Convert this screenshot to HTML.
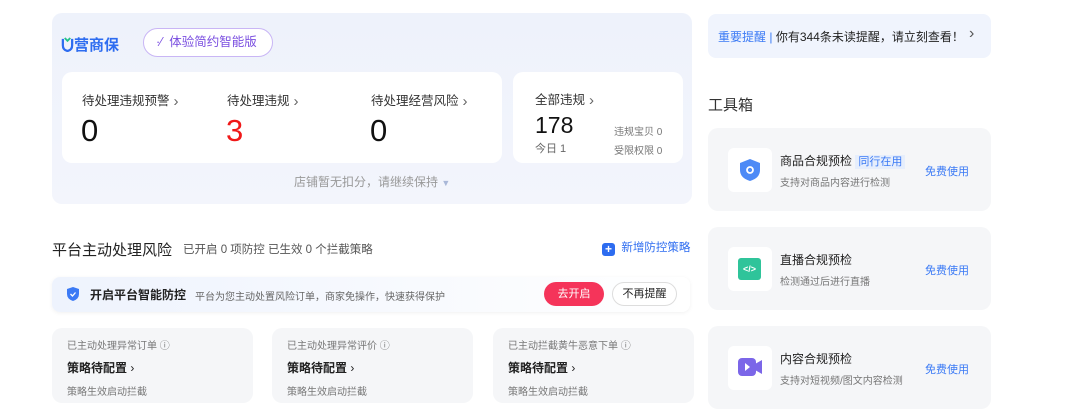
<!DOCTYPE html>
<html><head><meta charset="utf-8"><style>
*{margin:0;padding:0;box-sizing:border-box}
body{width:1086px;height:413px;background:#fff;font-family:"Liberation Sans","Noto Sans CJK SC",sans-serif;position:relative;overflow:hidden;color:#333}
.a{position:absolute;white-space:nowrap}
.top{left:52px;top:13px;width:640px;height:191px;border-radius:10px;background:linear-gradient(180deg,#eef2fb,#f3f5fc)}
.wc{background:#fff;border-radius:10px}
.lbl{font-size:12.5px;color:#333}
.big{font-size:31px;color:#111;font-family:"Liberation Sans",sans-serif}
.gray{background:#f5f6f8;border-radius:10px}
.chev{color:#666;font-size:15px;margin-left:4px;position:relative;top:1px}
</style></head><body>
<div class="a top"></div>
<div class="a" style="left:61px;top:34px;font-size:15px;font-weight:bold;color:#2d6cf0;">
<svg width="13" height="15" viewBox="0 0 14 16" style="vertical-align:-2px"><path d="M2 2 L2 9 Q2 14 7 15 Q12 14 12 9 L12 2" fill="none" stroke="#2d6cf0" stroke-width="2.4"/><path d="M4 1 L7 4 L10 1" fill="none" stroke="#25c28a" stroke-width="2"/></svg>营商保</div>
<div class="a" style="left:143px;top:28px;width:130px;height:29px;border-radius:15px;border:1.5px solid #c9b6f5;background:#fff;font-size:12.5px;color:#7a4ee0;line-height:26px;padding-left:12px">·⁄ &nbsp;体验简约智能版</div>
<div class="a wc" style="left:62px;top:72px;width:440px;height:91px"></div>
<div class="a wc" style="left:513px;top:72px;width:170px;height:91px"></div>
<div class="a lbl" style="left:82px;top:90px">待处理违规预警<span class="chev">›</span></div>
<div class="a lbl" style="left:227px;top:90px">待处理违规<span class="chev">›</span></div>
<div class="a lbl" style="left:371px;top:90px">待处理经营风险<span class="chev">›</span></div>
<div class="a big" style="left:81px;top:113px">0</div>
<div class="a big" style="left:226px;top:113px;color:#f01818">3</div>
<div class="a big" style="left:370px;top:113px">0</div>
<div class="a lbl" style="left:535px;top:89px">全部违规<span class="chev">›</span></div>
<div class="a" style="left:535px;top:112px;font-size:23px;color:#111">178</div>
<div class="a" style="left:535px;top:140px;font-size:11px;color:#666">今日 1</div>
<div class="a" style="left:614px;top:123px;font-size:10px;color:#777">违规宝贝 0</div>
<div class="a" style="left:614px;top:142px;font-size:10px;color:#777">受限权限 0</div>
<div class="a" style="left:294px;top:173px;font-size:12px;color:#999">店铺暂无扣分，请继续保持 <span style="color:#a9b8d8;font-size:9px">▼</span></div>

<div class="a" style="left:52px;top:239px;font-size:15px;color:#222">平台主动处理风险</div>
<div class="a" style="left:183px;top:241px;font-size:11.5px;color:#555">已开启 0 项防控 已生效 0 个拦截策略</div>
<div class="a" style="left:602px;top:239px;font-size:11.5px;color:#2d6cf0"><span style="display:inline-block;width:13px;height:13px;background:#2d6cf0;border-radius:3px;color:#fff;font-size:12px;line-height:13px;text-align:center;font-weight:bold;vertical-align:-2px">+</span>&nbsp; 新增防控策略</div>
<div class="a" style="left:52px;top:277px;width:638px;height:35px;border-radius:8px;background:linear-gradient(90deg,#eef3fd,#fff);box-shadow:0 1px 4px rgba(0,0,0,.06)"></div>
<svg class="a" style="left:67px;top:287px" width="12" height="14" viewBox="0 0 12 14"><path d="M6 0 L12 2 L12 7 Q12 12 6 14 Q0 12 0 7 L0 2Z" fill="#3b7af5"/><path d="M3.5 7 L5.5 9 L8.5 5.5" stroke="#fff" stroke-width="1.3" fill="none"/></svg>
<div class="a" style="left:90px;top:286px;font-size:12px;font-weight:bold;color:#222">开启平台智能防控</div>
<div class="a" style="left:195px;top:288px;font-size:10px;color:#666">平台为您主动处置风险订单，商家免操作，快速获得保护</div>
<div class="a" style="left:544px;top:282px;width:60px;height:24px;border-radius:12px;background:#f5345a;color:#fff;font-size:11px;text-align:center;line-height:24px">去开启</div>
<div class="a" style="left:612px;top:282px;width:65px;height:24px;border-radius:12px;border:1px solid #ddd;background:#fff;color:#222;font-size:11px;text-align:center;line-height:22px">不再提醒</div>

<div class="a gray" style="left:52px;top:328px;width:201px;height:75px"></div>
<div class="a gray" style="left:272px;top:328px;width:201px;height:75px"></div>
<div class="a gray" style="left:493px;top:328px;width:201px;height:75px"></div>
<div class="a" style="left:67px;top:337px;font-size:10px;color:#777">已主动处理异常订单 ⓘ</div>
<div class="a" style="left:287px;top:337px;font-size:10px;color:#777">已主动处理异常评价 ⓘ</div>
<div class="a" style="left:508px;top:337px;font-size:10px;color:#777">已主动拦截黄牛恶意下单 ⓘ</div>
<div class="a" style="left:67px;top:359px;font-size:12px;font-weight:bold;color:#222">策略待配置 <span style="font-weight:normal">›</span></div>
<div class="a" style="left:287px;top:359px;font-size:12px;font-weight:bold;color:#222">策略待配置 <span style="font-weight:normal">›</span></div>
<div class="a" style="left:508px;top:359px;font-size:12px;font-weight:bold;color:#222">策略待配置 <span style="font-weight:normal">›</span></div>
<div class="a" style="left:67px;top:383px;font-size:10px;color:#777">策略生效启动拦截</div>
<div class="a" style="left:287px;top:383px;font-size:10px;color:#777">策略生效启动拦截</div>
<div class="a" style="left:508px;top:383px;font-size:10px;color:#777">策略生效启动拦截</div>

<div class="a" style="left:708px;top:14px;width:283px;height:44px;border-radius:8px;background:#f0f4fd"></div>
<div class="a" style="left:718px;top:28px;font-size:12px;color:#222"><span style="color:#3b7af5">重要提醒</span> <span style="color:#3b7af5">|</span> 你有344条未读提醒，请立刻查看！</div>
<div class="a" style="left:969px;top:25px;font-size:16px;color:#555">›</div>
<div class="a" style="left:708px;top:94px;font-size:15px;color:#333">工具箱</div>

<div class="a gray" style="left:708px;top:128px;width:283px;height:83px"></div>
<div class="a gray" style="left:708px;top:227px;width:283px;height:83px"></div>
<div class="a gray" style="left:708px;top:326px;width:283px;height:83px"></div>
<div class="a wc" style="left:728px;top:148px;width:44px;height:44px;border-radius:6px"></div>
<div class="a wc" style="left:728px;top:247px;width:44px;height:44px;border-radius:6px"></div>
<div class="a wc" style="left:728px;top:346px;width:44px;height:44px;border-radius:6px"></div>
<svg class="a" style="left:740px;top:159px" width="20" height="22" viewBox="0 0 20 22"><path d="M10 0 L20 4 L20 11 Q20 19 10 22 Q0 19 0 11 L0 4Z" fill="#4d8af6"/><circle cx="10" cy="11" r="3" fill="none" stroke="#fff" stroke-width="1.8"/></svg>
<div class="a" style="left:738px;top:258px;width:23px;height:22px;border-radius:3px;background:#2fc49a;color:#fff;font-size:9px;text-align:center;line-height:22px;font-weight:bold">&lt;/&gt;</div>
<svg class="a" style="left:738px;top:358px" width="24" height="18" viewBox="0 0 24 18"><rect x="0" y="0" width="18" height="18" rx="4" fill="#7b66e8"/><path d="M17 6 L24 2 L24 16 L17 12Z" fill="#7b66e8"/><path d="M7 5 L12 9 L7 13Z" fill="#fff"/></svg>
<div class="a" style="left:780px;top:152px;font-size:12px;color:#222">商品合规预检 <span style="background:#e6eefc;color:#3b7af5;font-size:11px;padding:1px 3px">同行在用</span></div>
<div class="a" style="left:780px;top:174px;font-size:10px;color:#777">支持对商品内容进行检测</div>
<div class="a" style="left:780px;top:251px;font-size:12px;color:#222">直播合规预检</div>
<div class="a" style="left:780px;top:273px;font-size:10px;color:#777">检测通过后进行直播</div>
<div class="a" style="left:780px;top:350px;font-size:12px;color:#222">内容合规预检</div>
<div class="a" style="left:780px;top:372px;font-size:10px;color:#777">支持对短视频/图文内容检测</div>
<div class="a" style="left:925px;top:163px;font-size:11px;color:#3b7af5">免费使用</div>
<div class="a" style="left:925px;top:262px;font-size:11px;color:#3b7af5">免费使用</div>
<div class="a" style="left:925px;top:361px;font-size:11px;color:#3b7af5">免费使用</div>
</body></html>
